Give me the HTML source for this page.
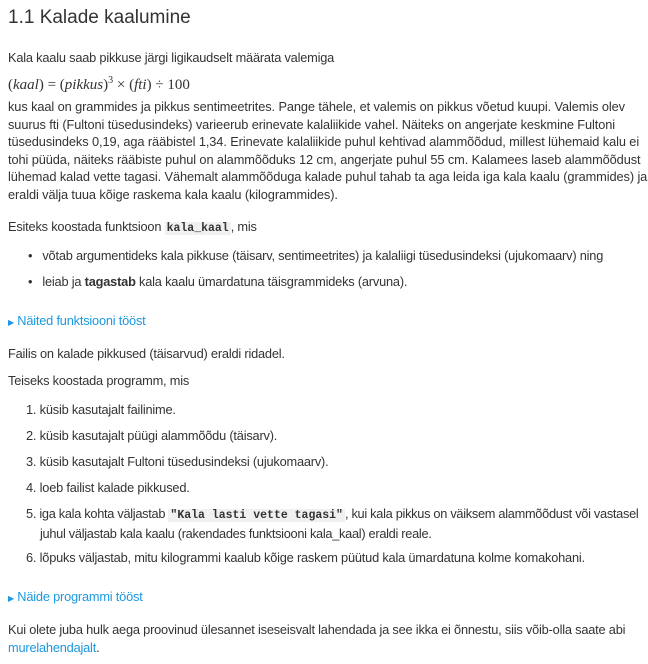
<!DOCTYPE html>
<html><head><meta charset="utf-8"><style>
body{margin:0;width:648px;height:664px;background:#fff;font-family:"Liberation Sans",sans-serif;color:#333;font-size:12.8px;overflow:hidden}
.a{position:absolute;left:8px;white-space:nowrap;line-height:17.5px;letter-spacing:-0.2px}
h1{position:absolute;left:8px;top:7px;margin:0;font-weight:normal;font-size:19px;color:#333}
code{font-family:"Liberation Mono",monospace;font-weight:bold;background:#f0f0f0;font-size:11.5px;padding:0 2px;letter-spacing:0}
.l{color:#1a98e0}
.m{font-family:"Liberation Serif",serif;font-style:italic;font-size:15px;letter-spacing:0}
.n{font-style:normal}
</style></head><body>
<h1>1.1 Kalade kaalumine</h1>
<div class="a" style="top:49px">Kala kaalu saab pikkuse järgi ligikaudselt määrata valemiga</div>
<div class="a m" style="top:72px"><span class="n">(</span>kaal<span class="n">) = (</span>pikkus<span class="n">)<sup style="font-size:10px">3</sup> × (</span>fti<span class="n">) ÷ 100</span></div>
<div class="a" style="top:98px;letter-spacing:-0.1px">kus kaal on grammides ja pikkus sentimeetrites. Pange tähele, et valemis on pikkus võetud kuupi. Valemis olev<br>suurus fti (Fultoni tüsedusindeks) varieerub erinevate kalaliikide vahel. Näiteks on angerjate keskmine Fultoni<br>tüsedusindeks 0,19, aga rääbistel 1,34. Erinevate kalaliikide puhul kehtivad alammõõdud, millest lühemaid kalu ei<br>tohi püüda, näiteks rääbiste puhul on alammõõduks 12 cm, angerjate puhul 55 cm. Kalamees laseb alammõõdust<br>lühemad kalad vette tagasi. Vähemalt alammõõduga kalade puhul tahab ta aga leida iga kala kaalu (grammides) ja<br>eraldi välja tuua kõige raskema kala kaalu (kilogrammides).</div>
<div class="a" style="top:218px">Esiteks koostada funktsioon <code>kala_kaal</code>, mis</div>
<div class="a" style="top:247px;left:28px">•&nbsp;&nbsp; võtab argumentideks kala pikkuse (täisarv, sentimeetrites) ja kalaliigi tüsedusindeksi (ujukomaarv) ning</div>
<div class="a" style="top:273px;left:28px">•&nbsp;&nbsp; leiab ja <b>tagastab</b> kala kaalu ümardatuna täisgrammideks (arvuna).</div>
<div class="a l" style="top:312px"><span style="font-size:8px">▶</span> Näited funktsiooni tööst</div>
<div class="a" style="top:345px">Failis on kalade pikkused (täisarvud) eraldi ridadel.</div>
<div class="a" style="top:372px">Teiseks koostada programm, mis</div>
<div class="a" style="top:401px;left:26px">1. küsib kasutajalt failinime.</div>
<div class="a" style="top:427px;left:26px">2. küsib kasutajalt püügi alammõõdu (täisarv).</div>
<div class="a" style="top:453px;left:26px">3. küsib kasutajalt Fultoni tüsedusindeksi (ujukomaarv).</div>
<div class="a" style="top:479px;left:26px">4. loeb failist kalade pikkused.</div>
<div class="a" style="top:505px;left:26px;letter-spacing:-0.3px">5. iga kala kohta väljastab <code>"Kala lasti vette tagasi"</code>, kui kala pikkus on väiksem alammõõdust või vastasel<br><span style="padding-left:14px">juhul väljastab kala kaalu (rakendades funktsiooni kala_kaal) eraldi reale.</span></div>
<div class="a" style="top:549px;left:26px">6. lõpuks väljastab, mitu kilogrammi kaalub kõige raskem püütud kala ümardatuna kolme komakohani.</div>
<div class="a l" style="top:588px"><span style="font-size:8px">▶</span> Näide programmi tööst</div>
<div class="a" style="top:621px">Kui olete juba hulk aega proovinud ülesannet iseseisvalt lahendada ja see ikka ei õnnestu, siis võib-olla saate abi<br><span class="l">murelahendajalt</span>.</div>
</body></html>
